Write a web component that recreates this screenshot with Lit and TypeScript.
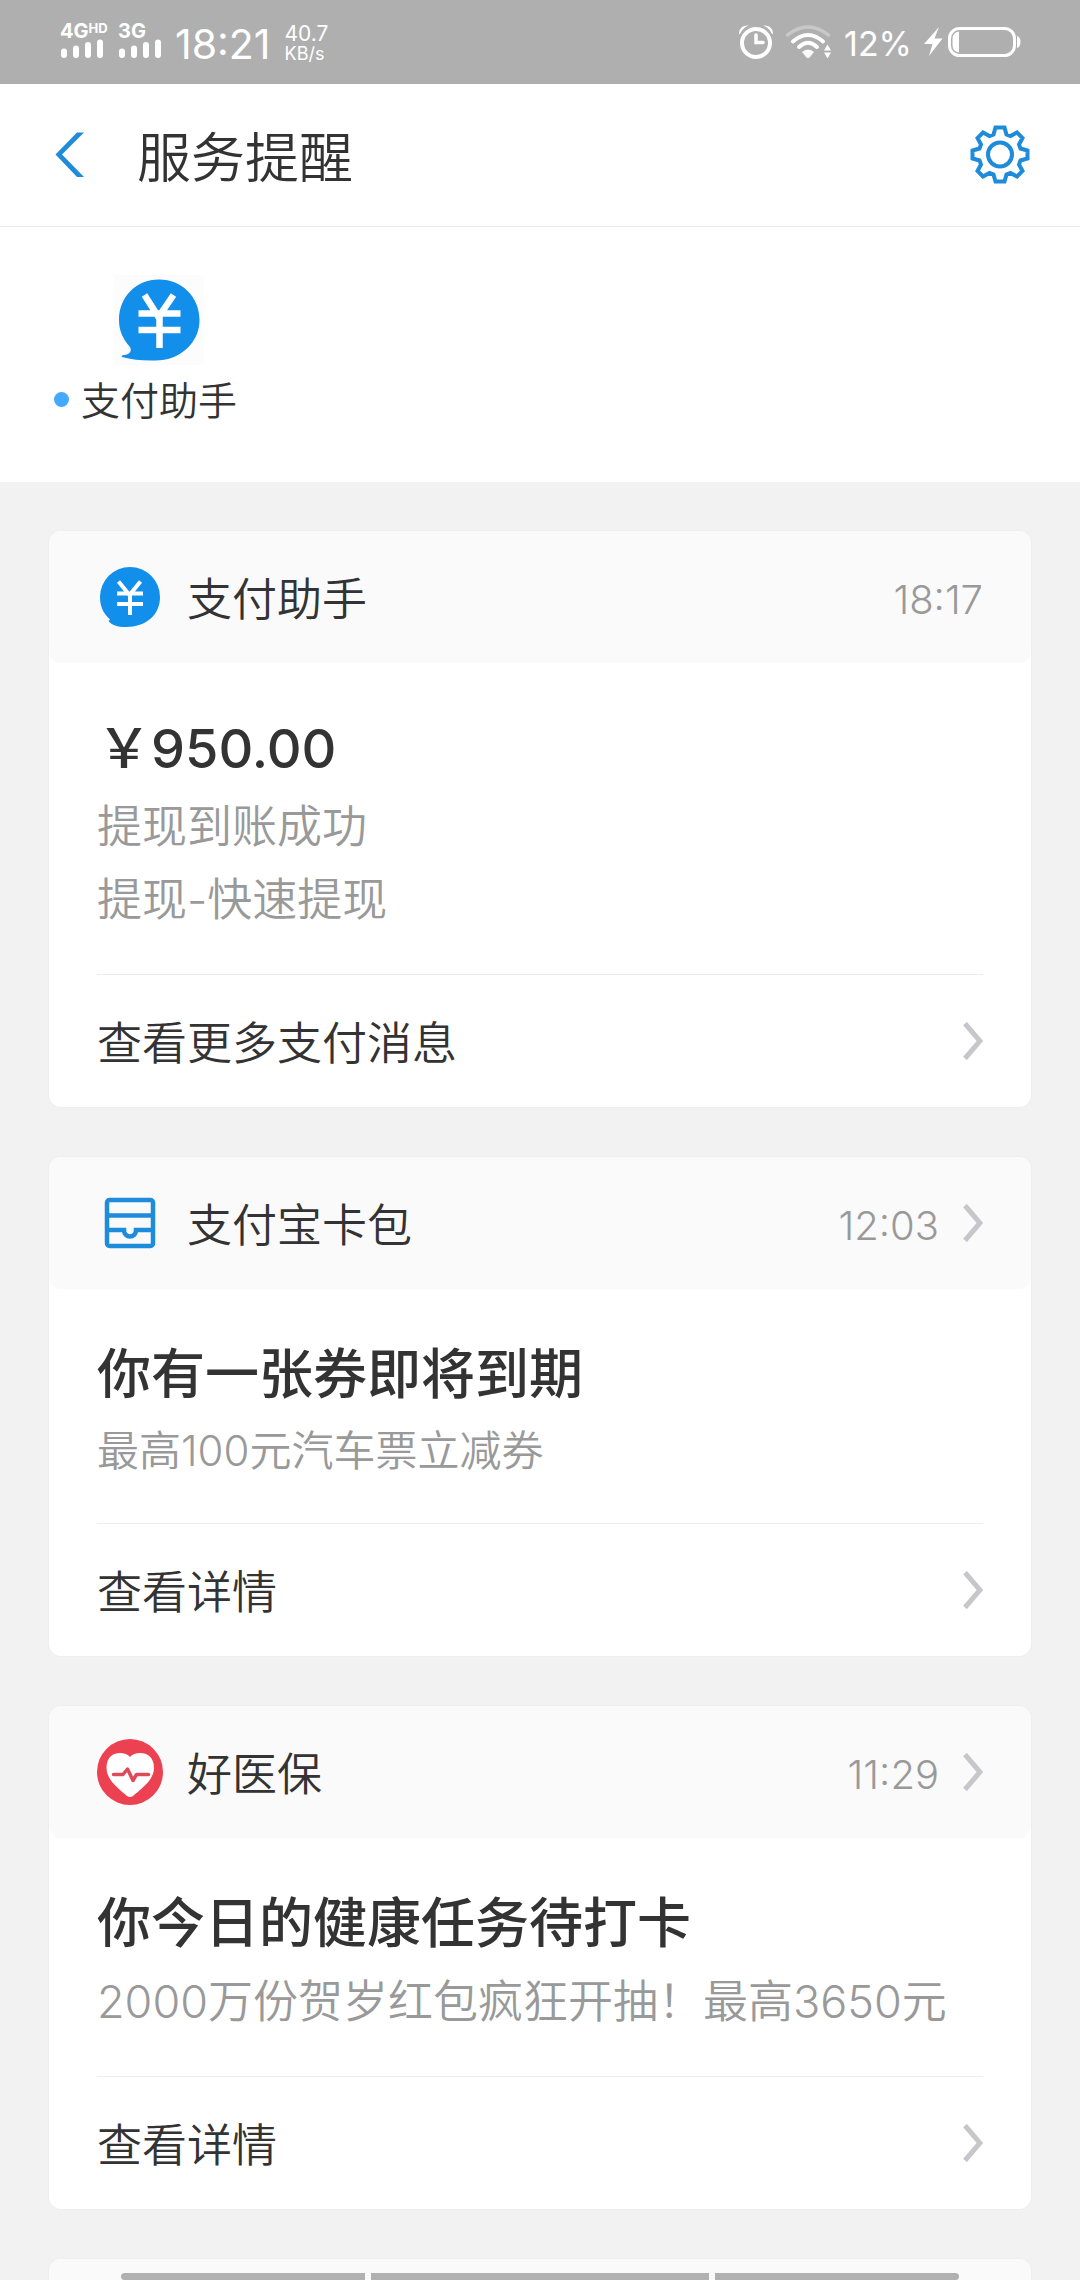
import { LitElement, html, css, svg, nothing, TemplateResult } from "lit";
import { customElement, property } from "lit/decorators.js";

interface Notice {
  icon: "pay" | "wallet" | "health";
  name: string;
  time: string;
  headLink: boolean;
  title: string;
  compact?: boolean;
  lines: string[];
  action: string;
}

const NOTICES: Notice[] = [
  {
    icon: "pay",
    name: "支付助手",
    time: "18:17",
    headLink: false,
    title: "￥950.00",
    lines: ["提现到账成功", "提现-快速提现"],
    action: "查看更多支付消息",
  },
  {
    icon: "wallet",
    name: "支付宝卡包",
    time: "12:03",
    headLink: true,
    title: "你有一张券即将到期",
    compact: true,
    lines: ["最高100元汽车票立减券"],
    action: "查看详情",
  },
  {
    icon: "health",
    name: "好医保",
    time: "11:29",
    headLink: true,
    title: "你今日的健康任务待打卡",
    lines: ["2000万份贺岁红包疯狂开抽！最高3650元"],
    action: "查看详情",
  },
];

const chevron = html`<svg class="chevron" viewBox="0 0 20 38" width="20" height="38" aria-hidden="true">
  <path d="M2 1.500 L17 19 L2 36.500" fill="none" stroke="#c7c7cb" stroke-width="5" />
</svg>`;

const yen = svg`<path d="M30.500 20 L44.500 42 L59.500 20 M24.500 38.500 H66.500 M24.500 55 H66.500 M45.500 41 V73" fill="none" stroke="#fff" stroke-width="6.500" />`;

const cardIcons: Record<Notice["icon"], TemplateResult> = {
  pay: html`<svg viewBox="0 0 66 66" width="66" height="66" aria-hidden="true">
    <path d="M33 3 A30 30 0 0 1 63 33 C63 51 49 63 29 63 C20 63 15 61 11.500 57 L13 55.500 C6 49 3 42 3 33 A30 30 0 0 1 33 3 Z" fill="#128eeb" />
    <path d="M21.500 17.500 L32.500 31 L43.500 17.500 M20 29.500 H46 M20 40 H46 M33 30 V51" fill="none" stroke="#fff" stroke-width="4" />
  </svg>`,
  wallet: html`<svg viewBox="0 0 66 66" width="66" height="66" aria-hidden="true">
    <rect x="10" y="10" width="46" height="46" rx="2.500" fill="none" stroke="#1f8bdb" stroke-width="4.500" />
    <path d="M10 25.500 H56 M10 40 H27 C27 48.500 39 48.500 39 40 H56" fill="none" stroke="#1f8bdb" stroke-width="4.500" />
  </svg>`,
  health: html`<svg viewBox="0 0 66 66" width="66" height="66" aria-hidden="true">
    <circle cx="33" cy="33" r="33" fill="#ec4150" />
    <path d="M33 18 C38 12 57 11 57 29 C57 41 44 50 36 57 Q33 59 30 57 C22 50 9.500 41 9.500 29 C9.500 11 28 12 33 18 Z" fill="#fff" />
    <path d="M16.500 35.500 H26 L30.500 30 L36 41.500 L39.500 35.500 H51.500" fill="none" stroke="#e04a58" stroke-width="3.500" stroke-linecap="round" stroke-linejoin="round" />
  </svg>`,
};

@customElement("status-bar")
class StatusBar extends LitElement {
  static styles = css`
    :host {
      display: flex;
      align-items: center;
      height: 84px;
      flex: none;
      box-sizing: border-box;
      padding: 0 59px 0 60px;
      background: #afafaf;
      color: #fff;
      font-family: Inter, Roboto, sans-serif;
      font-weight: 400;
    }
    .signals {
      display: flex;
      gap: 13px;
      margin-right: 12px;
    }
    .signal {
      display: flex;
      flex-direction: column;
      width: 45px;
      font-size: 20px;
      line-height: 15px;
      font-weight: 700;
      white-space: nowrap;
    }
    .net {
      display: flex;
    }
    .hd {
      font-size: 13px;
      line-height: 9px;
    }
    .clock {
      font-size: 41px;
      line-height: 48px;
      margin: 4px 14px 0 0;
    }
    .speed {
      display: flex;
      flex-direction: column;
      font-size: 21px;
      line-height: 20px;
      margin-top: 4px;
    }
    .unit {
      font-size: 18px;
      line-height: 20px;
    }
    .right {
      margin-left: auto;
      display: flex;
      align-items: center;
    }
    .wifi {
      margin: 0 12px;
    }
    .percent {
      font-size: 34px;
      line-height: 40px;
      margin: 4px 12px 0 0;
    }
  `;

  private signal(label: string, hd: boolean) {
    return html`<div class="signal">
      <span class="net">${label}${hd ? html`<span class="hd">HD</span>` : nothing}</span>
      <svg viewBox="0 0 45 21" width="45" height="21" aria-hidden="true">
        <path d="M4 12.500 V16 M16 9.500 V16 M28 6 V16 M40 3.500 V16" stroke="#fff" stroke-width="6" stroke-linecap="round" />
      </svg>
    </div>`;
  }

  render() {
    return html`
      <div class="signals">${this.signal("4G", true)} ${this.signal("3G", false)}</div>
      <span class="clock">18:21</span>
      <span class="speed"><span>40.7</span><span class="unit">KB/s</span></span>
      <div class="right">
        <svg viewBox="0 0 34 34" width="34" height="34" role="img" aria-label="闹钟">
          <circle cx="17" cy="18" r="14" fill="none" stroke="#fff" stroke-width="4" />
          <path d="M17 10 V17.500 H24" fill="none" stroke="#fff" stroke-width="3.500" stroke-linecap="round" />
          <path d="M0 9 C0 3 4 0 10 0.500 C5 2.500 3 5 1 9 Z M34 9 C34 3 30 0 24 0.500 C29 2.500 31 5 33 9 Z" fill="#fff" />
        </svg>
        <svg class="wifi" viewBox="0 0 47 34" width="47" height="34" role="img" aria-label="无线网络">
          <path d="M2.500 10 Q23 -6 43.500 10" fill="none" stroke="#c8c8c8" stroke-width="3.500" stroke-linecap="round" />
          <path d="M8 16.500 Q23 3.500 38 16.500" fill="none" stroke="#fff" stroke-width="4" stroke-linecap="round" />
          <path d="M14 22 Q23 13.500 32 22" fill="none" stroke="#fff" stroke-width="4" stroke-linecap="round" />
          <path d="M17 27 Q23 22 29 27 L24.500 32.500 Q23 33.500 21.500 32.500 Z" fill="#fff" />
          <path d="M39 25.500 L42.500 19.500 L46 25.500 Z M39 27.500 L42.500 33.500 L46 27.500 Z" fill="#fff" />
        </svg>
        <span class="percent">12%</span>
        <svg viewBox="0 0 97 32" width="97" height="32" role="img" aria-label="正在充电">
          <path d="M15 1 L0 18 H8.500 L5 30 L18.500 12.500 H10.500 Z" fill="#fff" />
          <rect x="25.500" y="2.500" width="65" height="27" rx="10" fill="none" stroke="#fff" stroke-width="3" />
          <path d="M35 5.500 V26.500 Q28.500 26 28.500 19 V13 Q28.500 6 35 5.500 Z" fill="#fff" />
          <path d="M93 10 Q96.500 11 96.500 16 Q96.500 21 93 22 Z" fill="#fff" />
        </svg>
      </div>
    `;
  }
}

@customElement("notice-card")
class NoticeCard extends LitElement {
  @property({ attribute: false }) notice?: Notice;

  static styles = css`
    :host {
      display: block;
      border-radius: 12px;
      background: #fff;
      box-shadow: 0 0 0 1px #eeeeee;
      color: #333;
    }
    a {
      color: inherit;
      text-decoration: none;
    }
    .head {
      display: flex;
      align-items: center;
      height: 132px;
      padding: 0 48px;
      border-radius: 12px;
      background: #fafafa;
    }
    .name {
      margin: 0 auto 0 24px;
      padding-top: 6px;
      font-size: 45px;
      line-height: 64px;
      font-weight: inherit;
    }
    .time {
      font-size: 40px;
      line-height: 48px;
      margin-top: 6px;
      color: #999;
    }
    .head .chevron {
      margin-left: 24px;
    }
    .body {
      padding: 47px 0 38px;
      margin: 0 48px;
      border-bottom: 1px solid #ececec;
    }
    .title {
      margin: 0 0 2px;
      font-size: 54px;
      line-height: 78px;
      font-weight: 500;
    }
    .line {
      margin: 0;
      font-size: 45px;
      line-height: 73px;
      color: #999;
    }
    .compact {
      font-size: 42px;
      line-height: 69px;
    }
    .action {
      display: flex;
      align-items: center;
      justify-content: space-between;
      height: 132px;
      padding: 0 48px;
      font-size: 45px;
      line-height: 64px;
    }
    .action-text {
      padding-top: 6px;
    }
    svg {
      flex: none;
    }
  `;

  render() {
    const n = this.notice;
    if (!n) return html`<div class="head"></div>`;
    const head = html`${cardIcons[n.icon]}
      <h2 class="name">${n.name}</h2>
      <span class="time">${n.time}</span>
      ${n.headLink ? chevron : nothing}`;
    return html`
      ${n.headLink ? html`<a class="head" href="#">${head}</a>` : html`<div class="head">${head}</div>`}
      <div class="body">
        <h3 class="title">${n.title}</h3>
        ${n.lines.map((l) => html`<p class="line ${n.compact ? "compact" : ""}">${l}</p>`)}
      </div>
      <a class="action" href="#"><span class="action-text">${n.action}</span>${chevron}</a>
    `;
  }
}

@customElement("app-root")
class AppRoot extends LitElement {
  static styles = css`
    :host {
      display: flex;
      flex-direction: column;
      position: relative;
      height: 100vh;
      overflow: hidden;
      background: #f2f2f2;
      color: #333;
      font-family: Inter, "Noto Sans CJK SC", sans-serif;
      font-weight: 350;
    }
    .bar {
      display: flex;
      align-items: center;
      flex: none;
      height: 142px;
      padding: 0 48px;
      background: #fff;
      border-bottom: 1px solid #ececec;
    }
    .icon-button {
      display: flex;
      padding: 0;
      border: 0;
      background: none;
    }
    .heading {
      margin: 0 auto 0 47px;
      padding-top: 8px;
      font-size: 54px;
      line-height: 78px;
      font-weight: inherit;
    }
    .apps {
      flex: none;
      display: flex;
      padding: 48px 54px 53px;
      background: #fff;
    }
    .app {
      display: grid;
      grid-template-columns: 15px auto;
      column-gap: 12px;
      align-items: center;
      color: inherit;
      text-decoration: none;
      font-size: 39px;
      line-height: 56px;
    }
    .app-icon {
      grid-column: 2;
      justify-self: center;
      margin-bottom: 8px;
    }
    .dot {
      width: 15px;
      height: 15px;
      margin-bottom: 4px;
      border-radius: 50%;
      background: #45aaff;
    }
    .list {
      display: flex;
      flex-direction: column;
      gap: 50px;
      padding: 49px 49px 0;
    }
    .nav {
      position: absolute;
      left: 0;
      right: 0;
      bottom: 0;
      display: flex;
      gap: 6px;
      padding: 0 121px;
    }
    .seg {
      flex: 244;
      height: 7px;
      background: #b1b1b1;
    }
    .seg:first-child {
      border-radius: 4px 0 0 4px;
    }
    .seg:last-child {
      border-radius: 0 4px 4px 0;
    }
    .wide {
      flex: 338;
    }
  `;

  render() {
    return html`
      <status-bar></status-bar>
      <header class="bar">
        <button class="icon-button" aria-label="返回">
          <svg viewBox="0 0 42 60" width="42" height="60" aria-hidden="true">
            <path d="M29 7.500 H36 L14 29.500 L36 52 H29 L7.500 29.500 Z" fill="#1f8bdb" />
          </svg>
        </button>
        <h1 class="heading">服务提醒</h1>
        <button class="icon-button" aria-label="设置">
          <svg viewBox="0 0 64 64" width="64" height="64" aria-hidden="true">
            <path
              d="M27.500 4.500 H36.500 L38.500 11.500 L42.500 13 L49 9.500 L54.500 15 L51 21.500 L52.500 25.500 L59.500 27.500 V35.500 L52.500 37.500 L51 41.500 L54.500 48 L49 53.500 L42.500 50 L38.500 51.500 L36.500 58.500 H27.500 L25.500 51.500 L21.500 50 L15 53.500 L9.500 48 L13 41.500 L11.500 37.500 L4.500 35.500 V27.500 L11.500 25.500 L13 21.500 L9.500 15 L15 9.500 L21.500 13 L25.500 11.500 Z"
              fill="none"
              stroke="#1f8bdb"
              stroke-width="4"
            />
            <circle cx="32" cy="31.500" r="12" fill="none" stroke="#1f8bdb" stroke-width="4" />
          </svg>
        </button>
      </header>
      <nav class="apps">
        <a class="app" href="#">
          <svg class="app-icon" viewBox="0 0 90 90" width="90" height="90" aria-hidden="true">
            <rect width="90" height="90" fill="#fcfcfd" />
            <path
              d="M45 4.500 C68 4.500 85.500 22 85.500 45 C85.500 64 72 79 54 84 C42 86.500 22 86 8 82 C7 80.500 9 80 11 80 C16 79 18 76 16 72 C9 64 5 56 5 45 C5 22 22 4.500 45 4.500 Z"
              fill="#128eeb"
            />
            ${yen}
          </svg>
          <span class="dot"></span>
          <span>支付助手</span>
        </a>
      </nav>
      <main class="list">
        ${NOTICES.map((n) => html`<notice-card .notice=${n}></notice-card>`)}
        <notice-card></notice-card>
      </main>
      <div class="nav"><span class="seg"></span><span class="seg wide"></span><span class="seg"></span></div>
    `;
  }
}
